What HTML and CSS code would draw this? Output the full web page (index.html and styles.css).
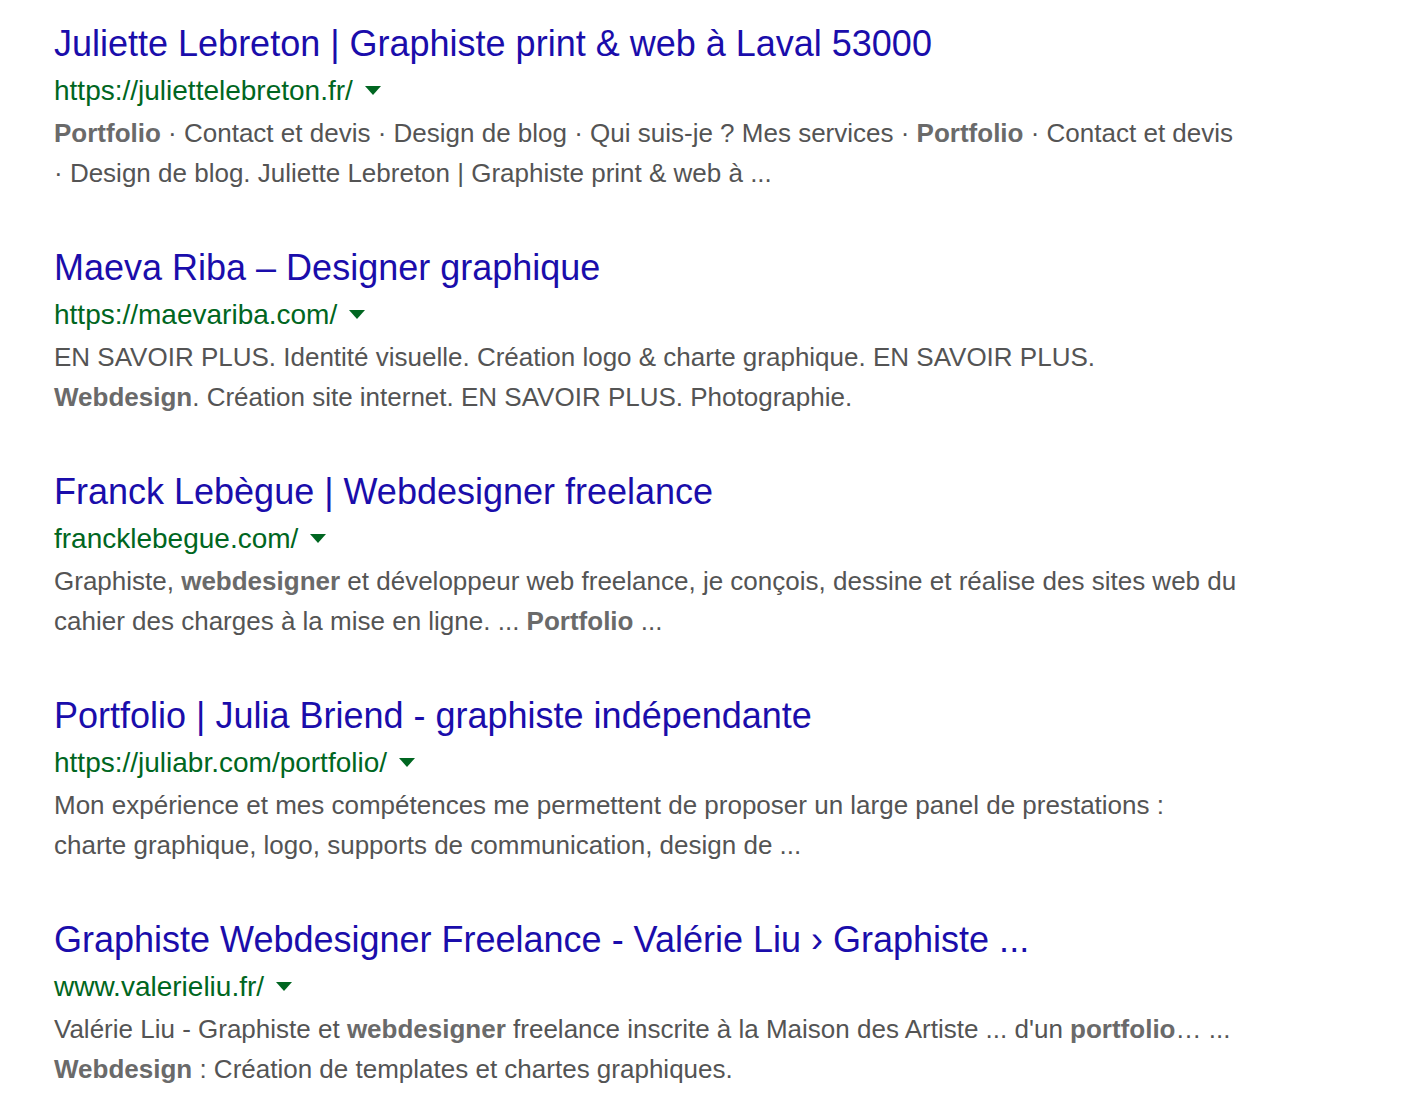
FILE: index.html
```html
<!DOCTYPE html>
<html lang="fr">
<head>
<meta charset="utf-8">
<title>Résultats</title>
<link rel="stylesheet" href="styles.css">
</head>
<body>
<main class="results">
  <div class="result">
    <h3 class="title"><a href="#">Juliette Lebreton | Graphiste print &amp; web à Laval 53000</a></h3>
    <div class="url">https://juliettelebreton.fr/<span class="arrow"></span></div>
    <div class="snippet"><b>Portfolio</b> · Contact et devis · Design de blog · Qui suis-je ? Mes services · <b>Portfolio</b> · Contact et devis<br>· Design de blog. Juliette Lebreton | Graphiste print &amp; web à ...</div>
  </div>
  <div class="result">
    <h3 class="title"><a href="#">Maeva Riba – Designer graphique</a></h3>
    <div class="url">https://maevariba.com/<span class="arrow"></span></div>
    <div class="snippet">EN SAVOIR PLUS. Identité visuelle. Création logo &amp; charte graphique. EN SAVOIR PLUS.<br><b>Webdesign</b>. Création site internet. EN SAVOIR PLUS. Photographie.</div>
  </div>
  <div class="result">
    <h3 class="title"><a href="#">Franck Lebègue | Webdesigner freelance</a></h3>
    <div class="url">francklebegue.com/<span class="arrow"></span></div>
    <div class="snippet">Graphiste, <b>webdesigner</b> et développeur web freelance, je conçois, dessine et réalise des sites web du<br>cahier des charges à la mise en ligne. ... <b>Portfolio</b> ...</div>
  </div>
  <div class="result">
    <h3 class="title"><a href="#">Portfolio | Julia Briend - graphiste indépendante</a></h3>
    <div class="url">https://juliabr.com/portfolio/<span class="arrow"></span></div>
    <div class="snippet">Mon expérience et mes compétences me permettent de proposer un large panel de prestations :<br>charte graphique, logo, supports de communication, design de ...</div>
  </div>
  <div class="result">
    <h3 class="title"><a href="#">Graphiste Webdesigner Freelance - Valérie Liu › Graphiste ...</a></h3>
    <div class="url">www.valerieliu.fr/<span class="arrow"></span></div>
    <div class="snippet">Valérie Liu - Graphiste et <b>webdesigner</b> freelance inscrite à la Maison des Artiste ... d'un <b>portfolio</b>… ...<br><b>Webdesign</b> : Création de templates et chartes graphiques.</div>
  </div>
</main>
</body>
</html>
```

FILE: styles.css
```css
html, body {
  margin: 0;
  padding: 0;
  background: #fff;
}
body {
  font-family: "Liberation Sans", Arial, sans-serif;
}
.results {
  padding: 20px 0 0 54px;
  width: 1300px;
}
.result {
  margin-bottom: 51px;
}
.title {
  margin: 0;
  font-size: 36px;
  font-weight: normal;
  line-height: 48px;
  white-space: nowrap;
}
.title a {
  color: #1a0dab;
  text-decoration: none;
}
.url {
  display: flex;
  align-items: center;
  margin-top: 1px;
  color: #006621;
  font-size: 28px;
  line-height: 44px;
  white-space: nowrap;
}
.arrow {
  display: inline-block;
  margin-left: 12px;
  margin-top: -2px;
  width: 0;
  height: 0;
  border-left: 8px solid transparent;
  border-right: 8px solid transparent;
  border-top: 9px solid #006621;
}
.snippet {
  color: #545454;
  font-size: 26px;
  line-height: 40px;
  white-space: nowrap;
}
.snippet b {
  color: #6a6a6a;
  font-weight: bold;
}
```
